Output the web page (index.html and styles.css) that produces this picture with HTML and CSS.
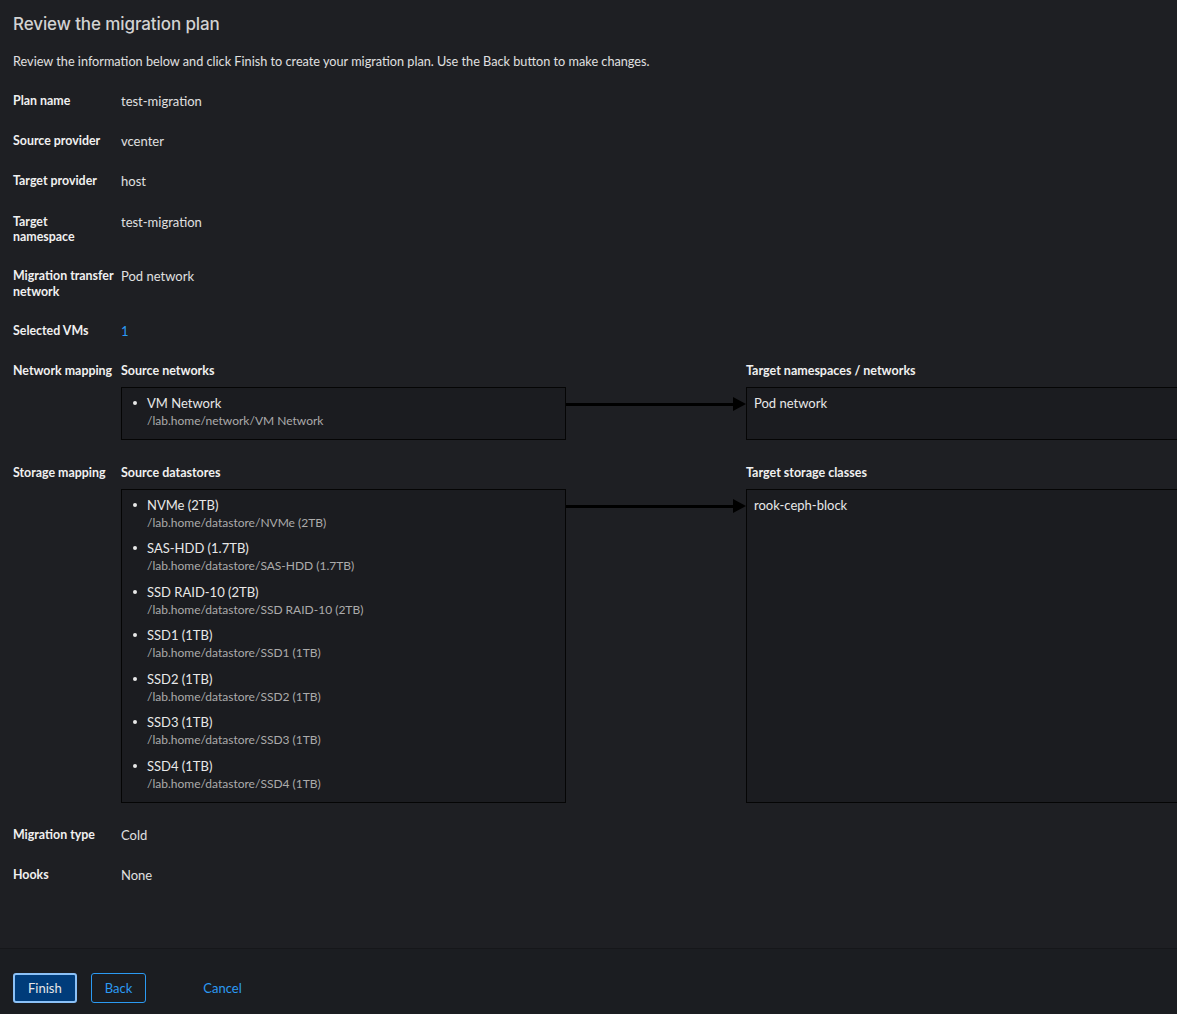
FILE: index.html
```html
<!DOCTYPE html>
<html lang="en">
<head>
<meta charset="utf-8">
<title>Review the migration plan</title>
<link rel="stylesheet" href="styles.css">
</head>
<body>
<div class="page">
  <main class="main">
    <h1 class="title">Review the migration plan</h1>
    <p class="intro">Review the information below and click Finish to create your migration plan. Use the Back button to make changes.</p>
    <dl class="details">
      <dt>Plan name</dt><dd>test-migration</dd>
      <dt>Source provider</dt><dd>vcenter</dd>
      <dt>Target provider</dt><dd>host</dd>
      <dt>Target<br>namespace</dt><dd>test-migration</dd>
      <dt>Migration transfer network</dt><dd>Pod network</dd>
      <dt>Selected VMs</dt><dd><a class="link" href="#">1</a></dd>
      <dt>Network mapping</dt>
      <dd>
        <div class="mapping">
          <div class="map-head">Source networks</div>
          <div></div>
          <div class="map-head">Target namespaces / networks</div>
          <div class="box">
            <ul class="items">
              <li><div class="item-name">VM Network</div><div class="item-path">/lab.home/network/VM Network</div></li>
            </ul>
          </div>
          <div class="arrow"><span class="line"></span><span class="head"></span></div>
          <div class="box target"><div class="target-name">Pod network</div></div>
        </div>
      </dd>
      <dt>Storage mapping</dt>
      <dd>
        <div class="mapping">
          <div class="map-head">Source datastores</div>
          <div></div>
          <div class="map-head">Target storage classes</div>
          <div class="box">
            <ul class="items">
              <li><div class="item-name">NVMe (2TB)</div><div class="item-path">/lab.home/datastore/NVMe (2TB)</div></li>
              <li><div class="item-name">SAS-HDD (1.7TB)</div><div class="item-path">/lab.home/datastore/SAS-HDD (1.7TB)</div></li>
              <li><div class="item-name">SSD RAID-10 (2TB)</div><div class="item-path">/lab.home/datastore/SSD RAID-10 (2TB)</div></li>
              <li><div class="item-name">SSD1 (1TB)</div><div class="item-path">/lab.home/datastore/SSD1 (1TB)</div></li>
              <li><div class="item-name">SSD2 (1TB)</div><div class="item-path">/lab.home/datastore/SSD2 (1TB)</div></li>
              <li><div class="item-name">SSD3 (1TB)</div><div class="item-path">/lab.home/datastore/SSD3 (1TB)</div></li>
              <li><div class="item-name">SSD4 (1TB)</div><div class="item-path">/lab.home/datastore/SSD4 (1TB)</div></li>
            </ul>
          </div>
          <div class="arrow"><span class="line"></span><span class="head"></span></div>
          <div class="box target"><div class="target-name">rook-ceph-block</div></div>
        </div>
      </dd>
      <dt>Migration type</dt><dd>Cold</dd>
      <dt>Hooks</dt><dd>None</dd>
    </dl>
  </main>
  <footer class="footer">
    <button class="btn btn-primary" type="button">Finish</button>
    <button class="btn btn-secondary" type="button">Back</button>
    <button class="btn btn-link" type="button">Cancel</button>
  </footer>
</div>
</body>
</html>
```

FILE: styles.css
```css
html, body {
  margin: 0;
  padding: 0;
  overflow: hidden;
  background: #1e1f23;
}
body {
  font-family: Lato, "Liberation Sans", sans-serif;
  font-size: 13px;
  color: #e0e0e0;
}
.page {
  display: flex;
  flex-direction: column;
  height: 1014px;
  width: 1177px;
  overflow: hidden;
}
.main {
  flex: 1;
  padding: 11px 13px 0 13px;
}
.title {
  margin: 0;
  font-family: Inter, Lato, sans-serif;
  font-size: 17px;
  font-weight: 500;
  color: #d2d2d2;
  line-height: 26px;
  letter-spacing: -0.1px;
}
.intro {
  margin: 15px 0 0 0;
  font-size: 12.7px;
  line-height: 18px;
  color: #e0e0e0;
}
.details {
  display: grid;
  grid-template-columns: 108px 1fr;
  column-gap: 0;
  row-gap: 24.2px;
  margin: 23px 0 0 0;
}
.details dt {
  margin: 0;
  font-size: 12.4px;
  font-weight: 700;
  line-height: 15.3px;
  color: #f0f0f0;
  padding-right: 4px;
}
.details dd {
  margin: 0;
  line-height: 16px;
  color: #e0e0e0;
}
.link {
  color: #2b9af3;
  text-decoration: none;
}
.mapping {
  display: grid;
  grid-template-columns: 445px 180px 446px;
  row-gap: 8px;
}
.map-head {
  font-weight: 700;
  font-size: 12.5px;
  line-height: 16px;
  color: #f0f0f0;
}
.box {
  border: 1px solid #050505;
  background: #1b1c20;
  padding: 6px 8px 9px 10px;
}
.items {
  margin: 0;
  padding: 0 0 0 15px;
  list-style: none;
  display: flex;
  flex-direction: column;
  gap: 7.5px;
}
.items li {
  line-height: 18px;
  position: relative;
}
.items li::before {
  content: "";
  position: absolute;
  left: -14px;
  top: 7px;
  width: 4px;
  height: 4px;
  border-radius: 50%;
  background: #e8e8e8;
}
.item-name {
  color: #e8e8e8;
}
.item-path {
  color: #ababab;
  font-size: 12px;
}
.target-name {
  line-height: 18px;
  color: #e8e8e8;
}
.box.target {
  padding-left: 7px;
}
.arrow {
  display: flex;
  align-items: flex-start;
  padding-top: 10px;
}
.arrow .line {
  flex: 1;
  height: 3px;
  margin-top: 6px;
  background: #000;
}
.arrow .head {
  width: 0;
  height: 0;
  border-top: 7.5px solid transparent;
  border-bottom: 7.5px solid transparent;
  border-left: 13px solid #000;
}
.footer {
  border-top: 1px solid #16171a;
  background: #1b1d21;
  display: flex;
  align-items: flex-start;
  gap: 14px;
  padding: 24px 13px 0 13px;
  box-sizing: border-box;
  height: 66px;
}
.btn {
  font-family: Lato, "Liberation Sans", sans-serif;
  font-size: 13px;
  line-height: 16px;
  border-radius: 3px;
  padding: 6px 14px;
  cursor: pointer;
}
.btn-primary {
  background: #003c7a;
  color: #e8e8e8;
  border: 2px solid #8bc1f7;
  padding: 5px 13px;
}
.btn-secondary {
  background: transparent;
  color: #2b9af3;
  border: 1px solid #2b9af3;
  padding: 6px 13px;
  margin-left: 0;
}
.btn-link {
  background: transparent;
  border: none;
  color: #2b9af3;
  margin-left: 29px;
  padding: 7px 14px;
}
```
